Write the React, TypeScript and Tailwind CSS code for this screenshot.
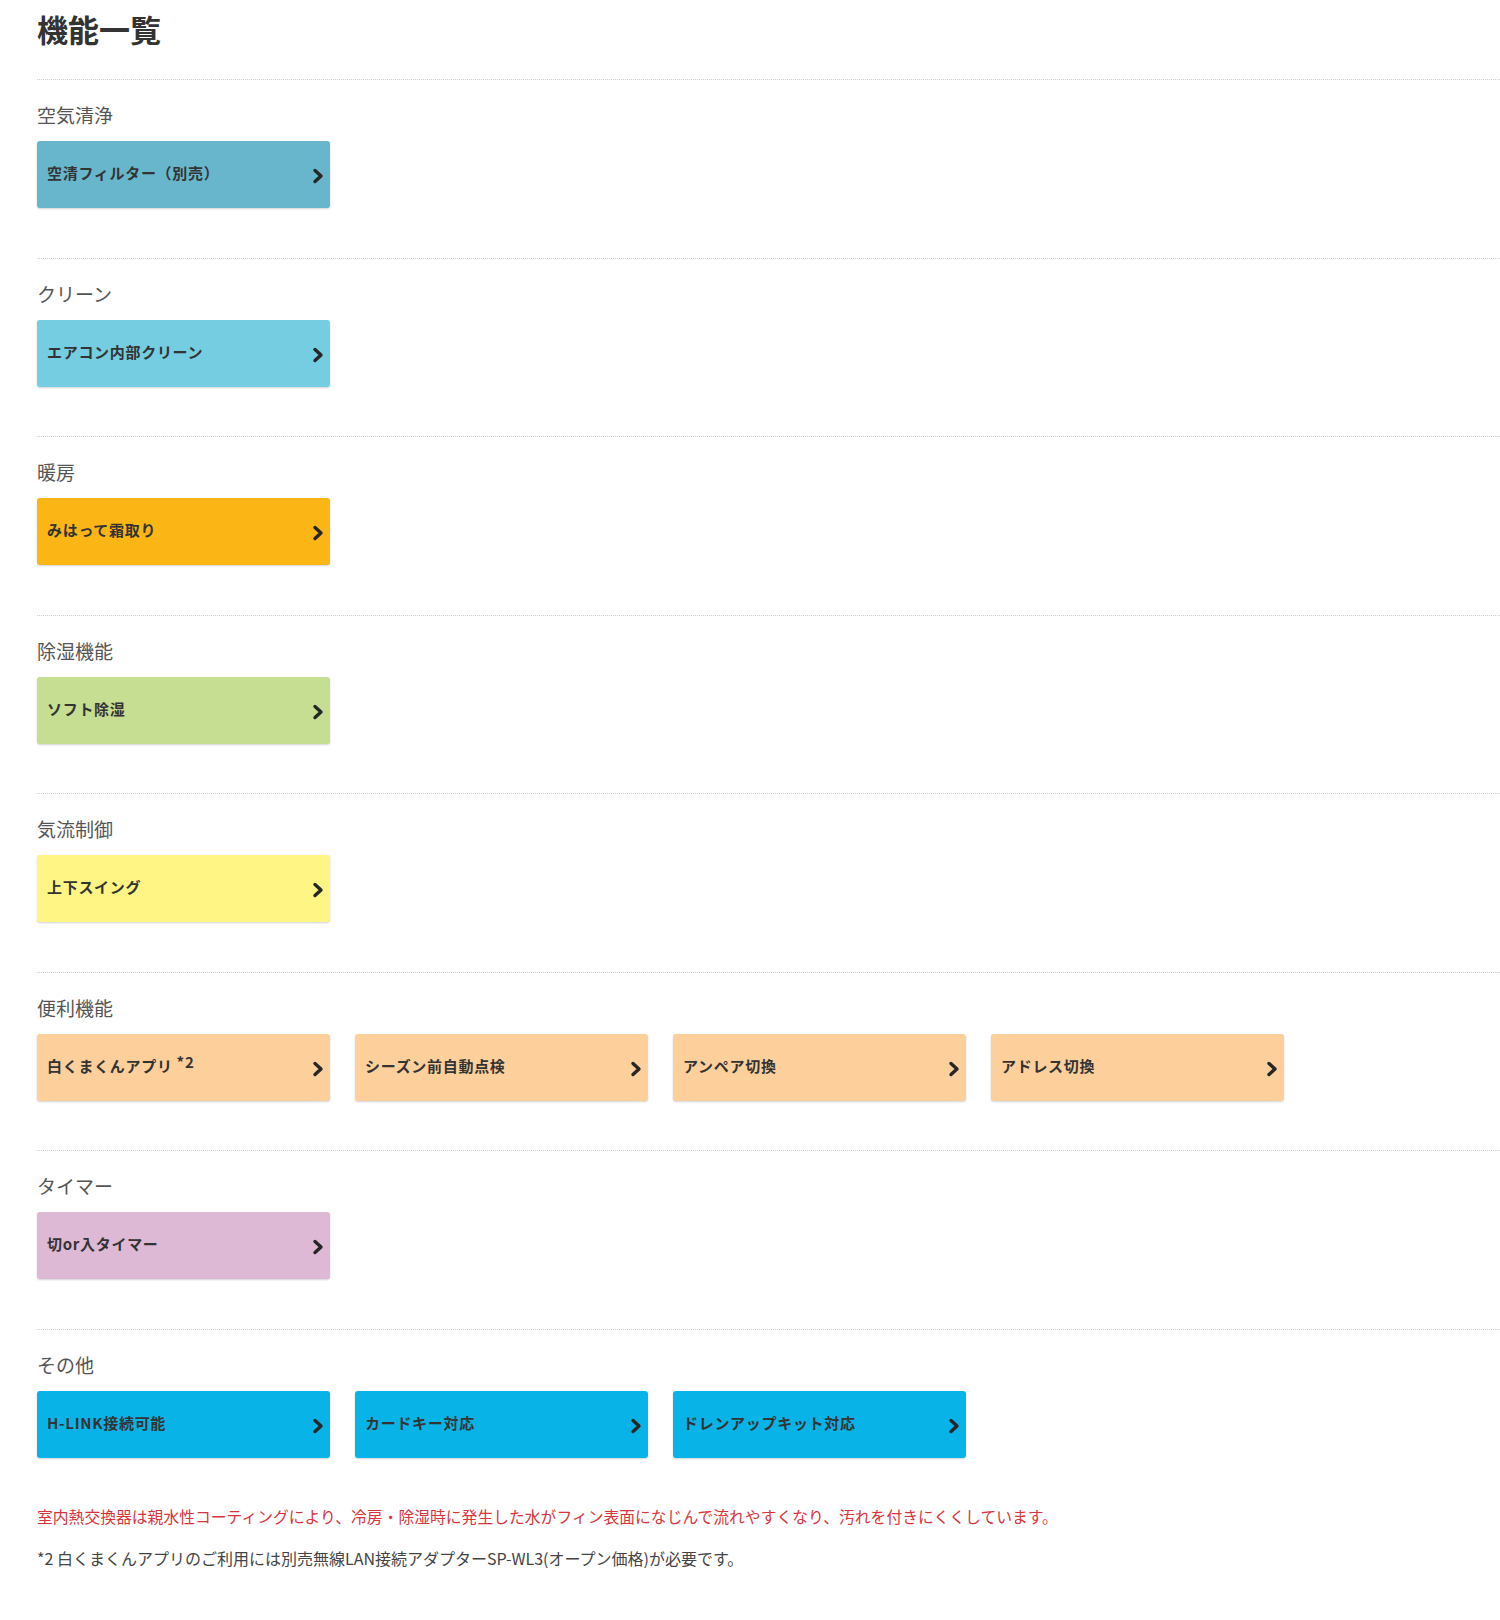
import React from "react";

type Item = { label: string; sup?: string };
type Section = { title: string; color: string; items: Item[] };

const sections: Section[] = [
  { title: "空気清浄", color: "bg-[#68b6cc]", items: [{ label: "空清フィルター（別売）" }] },
  { title: "クリーン", color: "bg-[#74cde0]", items: [{ label: "エアコン内部クリーン" }] },
  { title: "暖房", color: "bg-[#fbb616]", items: [{ label: "みはって霜取り" }] },
  { title: "除湿機能", color: "bg-[#c6de91]", items: [{ label: "ソフト除湿" }] },
  { title: "気流制御", color: "bg-[#fff584]", items: [{ label: "上下スイング" }] },
  {
    title: "便利機能",
    color: "bg-[#fdcf9b]",
    items: [
      { label: "白くまくんアプリ", sup: "*2" },
      { label: "シーズン前自動点検" },
      { label: "アンペア切換" },
      { label: "アドレス切換" },
    ],
  },
  { title: "タイマー", color: "bg-[#ddb9d6]", items: [{ label: "切or入タイマー" }] },
  {
    title: "その他",
    color: "bg-[#08b4e7]",
    items: [{ label: "H-LINK接続可能" }, { label: "カードキー対応" }, { label: "ドレンアップキット対応" }],
  },
];

function Chevron() {
  return (
    <svg width="12" height="16" viewBox="0 0 12 16" className="shrink-0 mt-[3px]">
      <polyline points="3,2.5 9,8 3,13.5" fill="none" stroke="#262626" strokeWidth="3.4" strokeLinecap="round" strokeLinejoin="round" />
    </svg>
  );
}

export default function App() {
  return (
    <div
      className="w-[1500px] min-h-[1620px] bg-white pl-[37px] text-[#333]"
      style={{ fontFamily: '"Noto Sans CJK JP", "Noto Sans", sans-serif' }}
    >
      <h1 className="pt-[6px] text-[31px] leading-[45px] font-bold mb-[28px]">機能一覧</h1>

      {sections.map((s, i) => (
        <div
          key={s.title}
          className={`border-t border-dotted border-[#cfcfcf] pt-[21px] ${i === sections.length - 1 ? "pb-[45px]" : "pb-[49.5px]"}`}
        >
          <div className="text-[19px] leading-[27px] text-[#555] mb-[13px]">{s.title}</div>
          <div className="flex gap-[25px]">
            {s.items.map((it) => (
              <a
                key={it.label}
                href="#"
                className={`${s.color} w-[293px] h-[67px] rounded-[3px] shadow-[0_1px_2px_rgba(0,0,0,0.18)] flex items-center justify-between pl-[10px] pr-[6px] text-[15px] tracking-[0.7px] font-bold text-[#333]`}
              >
                <span className="-mt-[2px]">
                  {it.label}
                  {it.sup && <sup className="text-[15px] ml-[4px] relative -top-[4px]">{it.sup}</sup>}
                </span>
                <Chevron />
              </a>
            ))}
          </div>
        </div>
      ))}

      <p className="text-[15.8px] leading-[28px] text-[#d9343c]">
        室内熱交換器は親水性コーティングにより、冷房・除湿時に発生した水がフィン表面になじんで流れやすくなり、汚れを付きにくくしています。
      </p>
      <p className="mt-[13px] text-[16px] leading-[28px] text-[#444]">
        *2 白くまくんアプリのご利用には別売無線LAN接続アダプターSP-WL3(オープン価格)が必要です。
      </p>
    </div>
  );
}
